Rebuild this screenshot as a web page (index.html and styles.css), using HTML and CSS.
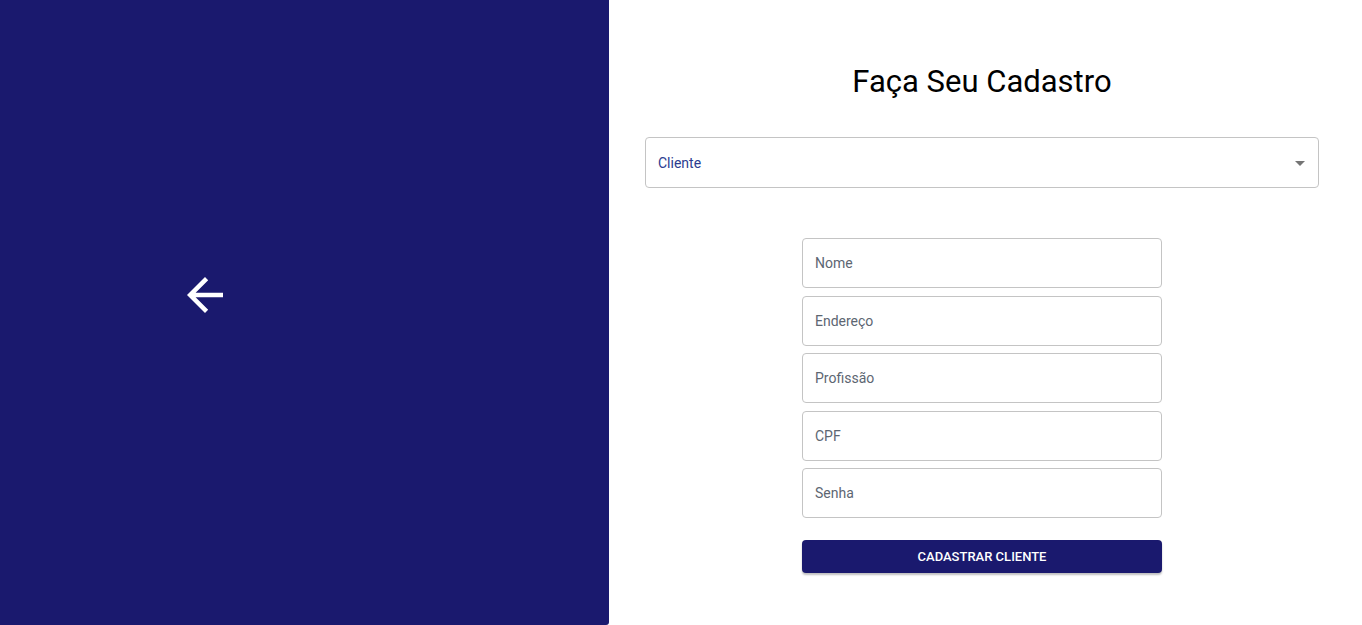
FILE: index.html
```html
<!DOCTYPE html>
<html lang="pt-BR">
<head>
<meta charset="utf-8">
<title>Cadastro</title>
<link rel="stylesheet" href="styles.css">
</head>
<body>
<div class="page">
  <aside class="side">
    <svg class="back" viewBox="0 0 24 24" width="54" height="54"><path fill="#fff" d="M20 11H7.83l5.59-5.59L12 4l-8 8 8 8 1.41-1.41L7.83 13H20v-2z"/></svg>
  </aside>
  <main class="main">
    <h1 class="title">Faça Seu Cadastro</h1>
    <div class="select">
      <span class="select-label">Cliente</span>
      <svg class="caret" viewBox="0 0 24 24" width="24" height="24"><path fill="#757575" d="M7 10l5 5 5-5z"/></svg>
    </div>
    <form class="form">
      <div class="field">Nome</div>
      <div class="field">Endereço</div>
      <div class="field">Profissão</div>
      <div class="field">CPF</div>
      <div class="field">Senha</div>
      <button type="button" class="btn">CADASTRAR CLIENTE</button>
    </form>
  </main>
</div>
</body>
</html>
```
FILE: styles.css
```css
html, body {
  margin: 0;
  padding: 0;
  background: #fff;
  font-family: Roboto, "Liberation Sans", sans-serif;
}
.page {
  display: flex;
  height: 625px;
}
.side {
  width: 609px;
  flex: none;
  background: #1a196e;
  border-bottom-right-radius: 3px;
  display: flex;
  align-items: center;
  justify-content: center;
  padding: 0 200px 36px 0;
  box-sizing: border-box;
}
.back {
  display: block;
}
.main {
  flex: 1;
  display: flex;
  flex-direction: column;
  align-items: center;
  padding: 0 43px 0 36px;
}
.title {
  margin: 62px 0 0;
  font-size: 31px;
  font-weight: 400;
  line-height: 40px;
  color: #000;
}
.select {
  margin-top: 35px;
  width: 100%;
  height: 51px;
  box-sizing: border-box;
  border: 1px solid #c4c4c4;
  border-radius: 4px;
  display: flex;
  align-items: center;
  justify-content: space-between;
  padding: 0 6px 0 12px;
}
.select-label {
  font-size: 14px;
  color: #2b3c90;
}
.form {
  margin-top: 50px;
  width: 360px;
  display: flex;
  flex-direction: column;
  gap: 7.5px;
}
.field {
  height: 50px;
  box-sizing: border-box;
  border: 1px solid #c4c4c4;
  border-radius: 4px;
  padding: 0 12px;
  display: flex;
  align-items: center;
  font-size: 14px;
  color: #5d6672;
}
.btn {
  margin-top: 14px;
  height: 33px;
  border: none;
  border-radius: 4px;
  background: #1a196e;
  color: #fff;
  font-family: Roboto, "Liberation Sans", sans-serif;
  font-size: 13px;
  font-weight: 500;
  box-shadow: 0 2px 2px rgba(0,0,0,0.25);
}
```
